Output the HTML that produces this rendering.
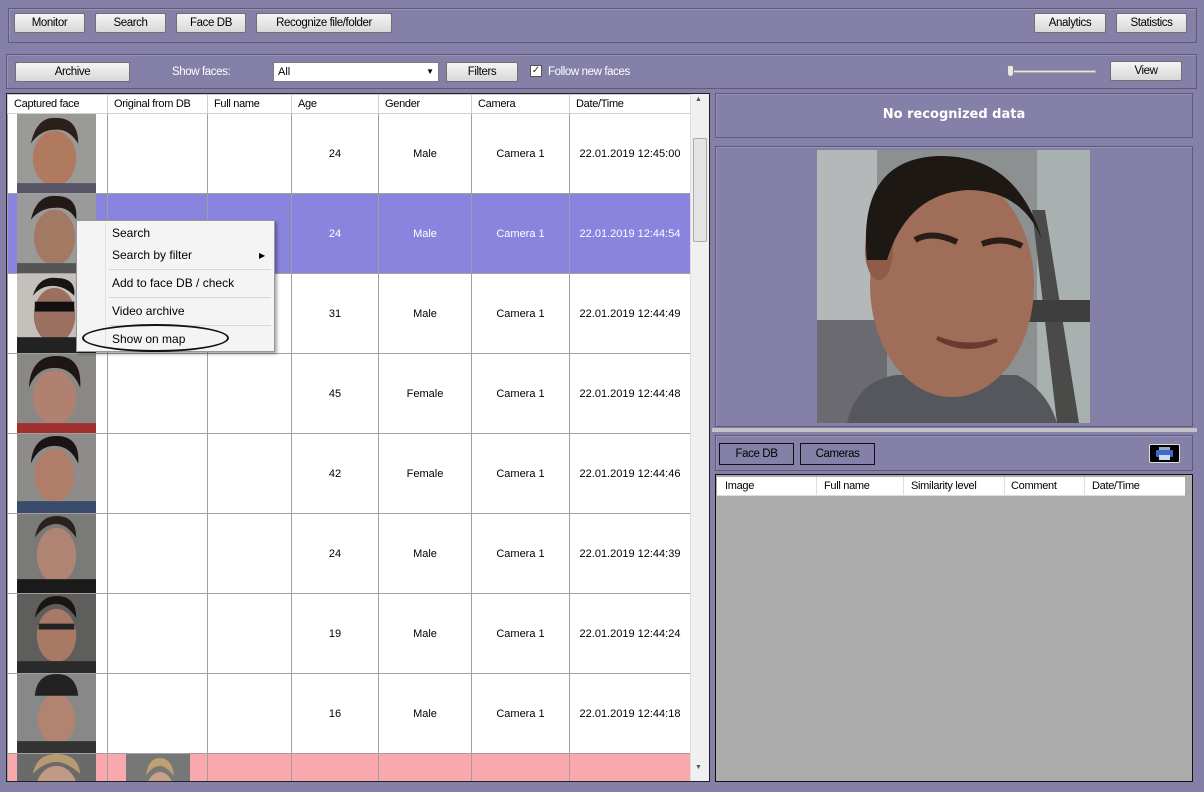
<!DOCTYPE html>
<html><head><meta charset="utf-8"><style>
*{box-sizing:border-box;margin:0;padding:0}
html,body{overflow:hidden}
body{width:1204px;height:792px;background:#8480a8;font-family:"Liberation Sans",sans-serif;font-size:11px;color:#000;position:relative}
.a{position:absolute}
.pan{position:absolute;border:1px solid #5e5a78;box-shadow:inset 1px 1px 0 #9894b8}
.btn{position:absolute;height:20px;border:1px solid #707070;border-radius:2px;background:linear-gradient(#f4f4f4,#e6e6e6 50%,#d8d8d8);text-align:center;line-height:18px;font-size:11.5px;letter-spacing:-0.4px}
table{border-collapse:collapse;table-layout:fixed}
td{border:1px solid #a0a0a0;text-align:center;font-size:11px;height:80px;padding:0;white-space:nowrap;overflow:hidden}
.hd td{height:19px;text-align:left;padding-left:6px;background:#fff;border-color:#d0d0d0;letter-spacing:-0.3px}
.sel td{background:#8a84de;color:#fff}
.pink td{background:#f9a9ae}
.face{display:block;width:79px;height:79px;margin-left:9px}
.mi{position:absolute;left:35px;font-size:12px}
</style></head><body>
<div class="pan" style="left:8px;top:8px;width:1189px;height:35px"></div>
<div class="btn" style="left:14px;top:13px;width:71px">Monitor</div>
<div class="btn" style="left:95px;top:13px;width:71px">Search</div>
<div class="btn" style="left:176px;top:13px;width:70px">Face DB</div>
<div class="btn" style="left:256px;top:13px;width:136px">Recognize file/folder</div>
<div class="btn" style="left:1034px;top:13px;width:72px">Analytics</div>
<div class="btn" style="left:1116px;top:13px;width:71px">Statistics</div>

<div class="pan" style="left:6px;top:54px;width:1191px;height:35px"></div>
<div class="btn" style="left:15px;top:62px;width:115px">Archive</div>
<div class="a" style="left:172px;top:66px;color:#fff;letter-spacing:-0.4px;font-size:11.5px">Show faces:</div>
<div class="a" style="left:273px;top:62px;width:166px;height:20px;background:#fff;border:1px solid #7a7a7a;padding:3px 4px;font-size:11px">All<span class="a" style="right:4px;top:4px;font-size:8px">▼</span></div>
<div class="btn" style="left:446px;top:62px;width:72px">Filters</div>
<div class="a" style="left:530px;top:65px;width:12px;height:12px;background:#fff;border:1px solid #555;font-size:10px;line-height:10px;text-align:center;color:#333">✓</div>
<div class="a" style="left:548px;top:66px;color:#fff;letter-spacing:-0.4px;font-size:11.5px">Follow new faces</div>
<div class="a" style="left:1010px;top:70px;width:86px;height:3px;background:#e8e8e8;border:1px solid #aaa"></div>
<div class="a" style="left:1007px;top:65px;width:7px;height:12px;background:#e8e8e8;border:1px solid #888;border-radius:2px 2px 4px 4px"></div>
<div class="btn" style="left:1110px;top:61px;width:72px">View</div>

<div class="a" style="left:6px;top:93px;width:704px;height:689px;border:1px solid #222;background:#fff;overflow:hidden">
<table style="width:683px">
<colgroup><col style="width:100px"><col style="width:100px"><col style="width:84px"><col style="width:87px"><col style="width:93px"><col style="width:98px"><col style="width:121px"></colgroup>
<tr class="hd"><td>Captured face</td><td>Original from DB</td><td>Full name</td><td>Age</td><td>Gender</td><td>Camera</td><td>Date/Time</td></tr>
<tr><td><svg class="face" viewBox="0 0 80 80"><rect width="80" height="80" fill="#9a9a96"/><ellipse cx="38" cy="45" rx="22" ry="28" fill="#b07a60"/><path d="M14 30Q20 2 40 4Q62 4 62 30Q52 14 38 16Q24 16 14 30" fill="#2a1f1a"/><rect y="70" width="80" height="10" fill="#556"/></svg></td><td></td><td></td><td>24</td><td>Male</td><td>Camera 1</td><td>22.01.2019 12:45:00</td></tr>
<tr class="sel"><td><svg class="face" viewBox="0 0 80 80"><rect width="80" height="80" fill="#9a9a9a"/><ellipse cx="38" cy="44" rx="21" ry="28" fill="#a27a64"/><path d="M14 26Q20 0 40 2Q62 2 60 26Q52 12 38 14Q24 14 14 26" fill="#221a16"/><rect y="70" width="80" height="10" fill="#555"/></svg></td><td></td><td></td><td>24</td><td>Male</td><td>Camera 1</td><td>22.01.2019 12:44:54</td></tr>
<tr><td><svg class="face" viewBox="0 0 80 80"><rect width="80" height="80" fill="#c4c0bc"/><ellipse cx="38" cy="42" rx="21" ry="28" fill="#9c7060"/><path d="M16 22Q22 2 40 4Q60 4 58 22Q48 12 36 12Q24 12 16 22" fill="#1a1412"/><rect x="18" y="28" width="40" height="10" fill="#111"/><rect y="64" width="80" height="16" fill="#222"/></svg></td><td></td><td></td><td>31</td><td>Male</td><td>Camera 1</td><td>22.01.2019 12:44:49</td></tr>
<tr><td><svg class="face" viewBox="0 0 80 80"><rect width="80" height="80" fill="#8a8884"/><ellipse cx="38" cy="44" rx="22" ry="27" fill="#b08070"/><path d="M12 34Q14 2 40 2Q66 2 64 34Q56 14 38 14Q20 14 12 34" fill="#1e1614"/><rect y="70" width="80" height="10" fill="#a03030"/></svg></td><td></td><td></td><td>45</td><td>Female</td><td>Camera 1</td><td>22.01.2019 12:44:48</td></tr>
<tr><td><svg class="face" viewBox="0 0 80 80"><rect width="80" height="80" fill="#8e8c8a"/><ellipse cx="38" cy="42" rx="20" ry="27" fill="#b07e68"/><path d="M14 30Q16 2 40 2Q64 2 62 30Q54 12 38 12Q22 12 14 30" fill="#1c1412"/><rect y="68" width="80" height="12" fill="#3a4a6a"/></svg></td><td></td><td></td><td>42</td><td>Female</td><td>Camera 1</td><td>22.01.2019 12:44:46</td></tr>
<tr><td><svg class="face" viewBox="0 0 80 80"><rect width="80" height="80" fill="#7a7a78"/><ellipse cx="40" cy="42" rx="20" ry="28" fill="#b08472"/><path d="M18 24Q22 2 40 2Q60 2 60 24Q50 10 40 10Q28 10 18 24" fill="#2a201c"/><rect y="66" width="80" height="14" fill="#1a1a1a"/></svg></td><td></td><td></td><td>24</td><td>Male</td><td>Camera 1</td><td>22.01.2019 12:44:39</td></tr>
<tr><td><svg class="face" viewBox="0 0 80 80"><rect width="80" height="80" fill="#5e5e5c"/><ellipse cx="40" cy="42" rx="20" ry="27" fill="#a87a66"/><path d="M18 24Q22 2 40 2Q60 2 60 24Q50 10 40 10Q28 10 18 24" fill="#1a1412"/><rect x="22" y="30" width="36" height="6" fill="#222"/><rect y="68" width="80" height="12" fill="#2a2a2a"/></svg></td><td></td><td></td><td>19</td><td>Male</td><td>Camera 1</td><td>22.01.2019 12:44:24</td></tr>
<tr><td><svg class="face" viewBox="0 0 80 80"><rect width="80" height="80" fill="#888"/><ellipse cx="40" cy="46" rx="19" ry="26" fill="#b08470"/><path d="M18 22Q20 0 40 0Q60 0 62 22Z" fill="#222"/><rect y="68" width="80" height="12" fill="#333"/></svg></td><td></td><td></td><td>16</td><td>Male</td><td>Camera 1</td><td>22.01.2019 12:44:18</td></tr>
<tr class="pink"><td><svg class="face" viewBox="0 0 80 80"><rect width="80" height="80" fill="#6a6a6a"/><ellipse cx="40" cy="40" rx="22" ry="28" fill="#c09a84"/><path d="M16 20Q20 0 40 0Q62 0 64 20Q50 8 40 8Q28 8 16 20" fill="#b89a70"/></svg></td><td style="text-align:left"><svg style="display:block;margin-left:18px;width:64px;height:79px" viewBox="0 0 64 79"><rect width="64" height="79" fill="#777"/><ellipse cx="34" cy="38" rx="14" ry="20" fill="#c8a088"/><path d="M20 22Q22 4 34 4Q46 4 48 22Q40 12 34 12Q26 12 20 22" fill="#c0a070"/></svg></td><td style="vertical-align:bottom;text-align:left;padding-left:12px">Miller Sand</td><td></td><td></td><td></td><td></td></tr>
</table>
<div class="a" style="left:683px;top:0;width:19px;height:688px;background:#f0f0f0;border-left:1px solid #ddd"><div class="a" style="left:4px;top:2px;font-size:7px;color:#555">▲</div><div class="a" style="left:2px;top:44px;width:14px;height:104px;background:#e4e4e4;border:1px solid #aaa;border-radius:2px"></div><div class="a" style="left:4px;top:670px;font-size:7px;color:#555">▼</div></div>
</div>

<div class="a" style="left:76px;top:220px;width:199px;height:132px;background:#f4f4f4;border:1px solid #979797;box-shadow:2px 2px 3px rgba(0,0,0,.35)">
<div class="a" style="left:28px;top:2px;width:1px;height:126px;background:#e2e2e2"></div>
<div class="mi" style="top:5px">Search</div>
<div class="mi" style="top:27px">Search by filter</div><div class="a" style="left:182px;top:30px;font-size:8px">▶</div>
<div class="a" style="left:32px;top:48px;width:162px;height:1px;background:#d6d6d6"></div>
<div class="mi" style="top:55px">Add to face DB / check</div>
<div class="a" style="left:32px;top:76px;width:162px;height:1px;background:#d6d6d6"></div>
<div class="mi" style="top:83px">Video archive</div>
<div class="a" style="left:32px;top:104px;width:162px;height:1px;background:#d6d6d6"></div>
<div class="mi" style="top:111px">Show on map</div>
</div>
<div class="a" style="left:82px;top:324px;width:147px;height:28px;border:2px solid #111;border-radius:50%"></div>

<div class="pan" style="left:715px;top:93px;width:478px;height:45px"></div>
<div class="a" style="left:715px;top:107px;width:478px;text-align:center;color:#fff;font-weight:bold;font-size:13px;font-family:'DejaVu Sans',sans-serif">No recognized data</div>
<div class="pan" style="left:715px;top:146px;width:478px;height:281px"></div>
<svg class="a" style="left:817px;top:150px" width="273" height="273" viewBox="0 0 273 273">
<rect width="273" height="273" fill="#8c9090"/><rect x="0" y="0" width="60" height="273" fill="#b4b8b8"/><rect x="220" y="0" width="53" height="273" fill="#a8b0b0"/>
<path d="M215 60L240 273H262L228 60Z" fill="#4a4a48"/><rect x="200" y="150" width="73" height="22" fill="#3e3e3e"/>
<rect x="0" y="170" width="70" height="103" fill="#6a6a70"/>
<path d="M30 273Q40 230 80 225H200Q230 240 240 273Z" fill="#55575c"/>
<ellipse cx="135" cy="135" rx="82" ry="112" fill="#a06e58"/>
<ellipse cx="62" cy="100" rx="14" ry="30" fill="#8e5c48"/>
<path d="M50 110Q40 10 120 6Q200 4 225 90Q205 40 150 40Q90 44 70 110Z" fill="#1e1814"/>
<path d="M98 90Q115 80 140 92" stroke="#2a1c16" stroke-width="6" fill="none"/><path d="M165 94Q185 86 205 96" stroke="#2a1c16" stroke-width="6" fill="none"/>
<path d="M120 188Q150 205 180 190Q150 200 120 188Z" fill="#eee" stroke="#6a3a30" stroke-width="4"/>
</svg>
<div class="a" style="left:712px;top:428px;width:485px;height:4px;background:#c4c4c8"></div>
<div class="pan" style="left:715px;top:435px;width:478px;height:36px"></div>
<div class="a" style="left:719px;top:443px;width:75px;height:22px;border:1px solid #111;text-align:center;line-height:20px;letter-spacing:-0.4px;font-size:11.5px">Face DB</div>
<div class="a" style="left:800px;top:443px;width:75px;height:22px;border:1px solid #111;text-align:center;line-height:20px;letter-spacing:-0.4px;font-size:11.5px">Cameras</div>
<div class="a" style="left:1149px;top:444px;width:31px;height:19px;background:#000;border:1px solid #ddd;border-radius:2px"><svg width="29" height="17" viewBox="0 0 29 17"><rect x="9" y="2" width="11" height="4" fill="#9ab"/><rect x="6" y="5" width="17" height="7" rx="1" fill="#3a6ad0"/><rect x="9" y="10" width="11" height="5" fill="#cde"/></svg></div>
<div class="a" style="left:715px;top:474px;width:478px;height:308px;background:#ababab;border:1px solid #111"></div>
<div class="a" style="left:717px;top:477px;width:468px;height:19px;background:#fff;border-bottom:1px solid #ddd;letter-spacing:-0.3px">
<span class="a" style="left:8px;top:3px">Image</span><span class="a" style="left:99px;top:0;width:1px;height:19px;background:#e0e0e0"></span>
<span class="a" style="left:107px;top:3px">Full name</span><span class="a" style="left:186px;top:0;width:1px;height:19px;background:#e0e0e0"></span>
<span class="a" style="left:194px;top:3px">Similarity level</span><span class="a" style="left:287px;top:0;width:1px;height:19px;background:#e0e0e0"></span>
<span class="a" style="left:294px;top:3px">Comment</span><span class="a" style="left:367px;top:0;width:1px;height:19px;background:#e0e0e0"></span>
<span class="a" style="left:375px;top:3px">Date/Time</span>
</div>
</body></html>
